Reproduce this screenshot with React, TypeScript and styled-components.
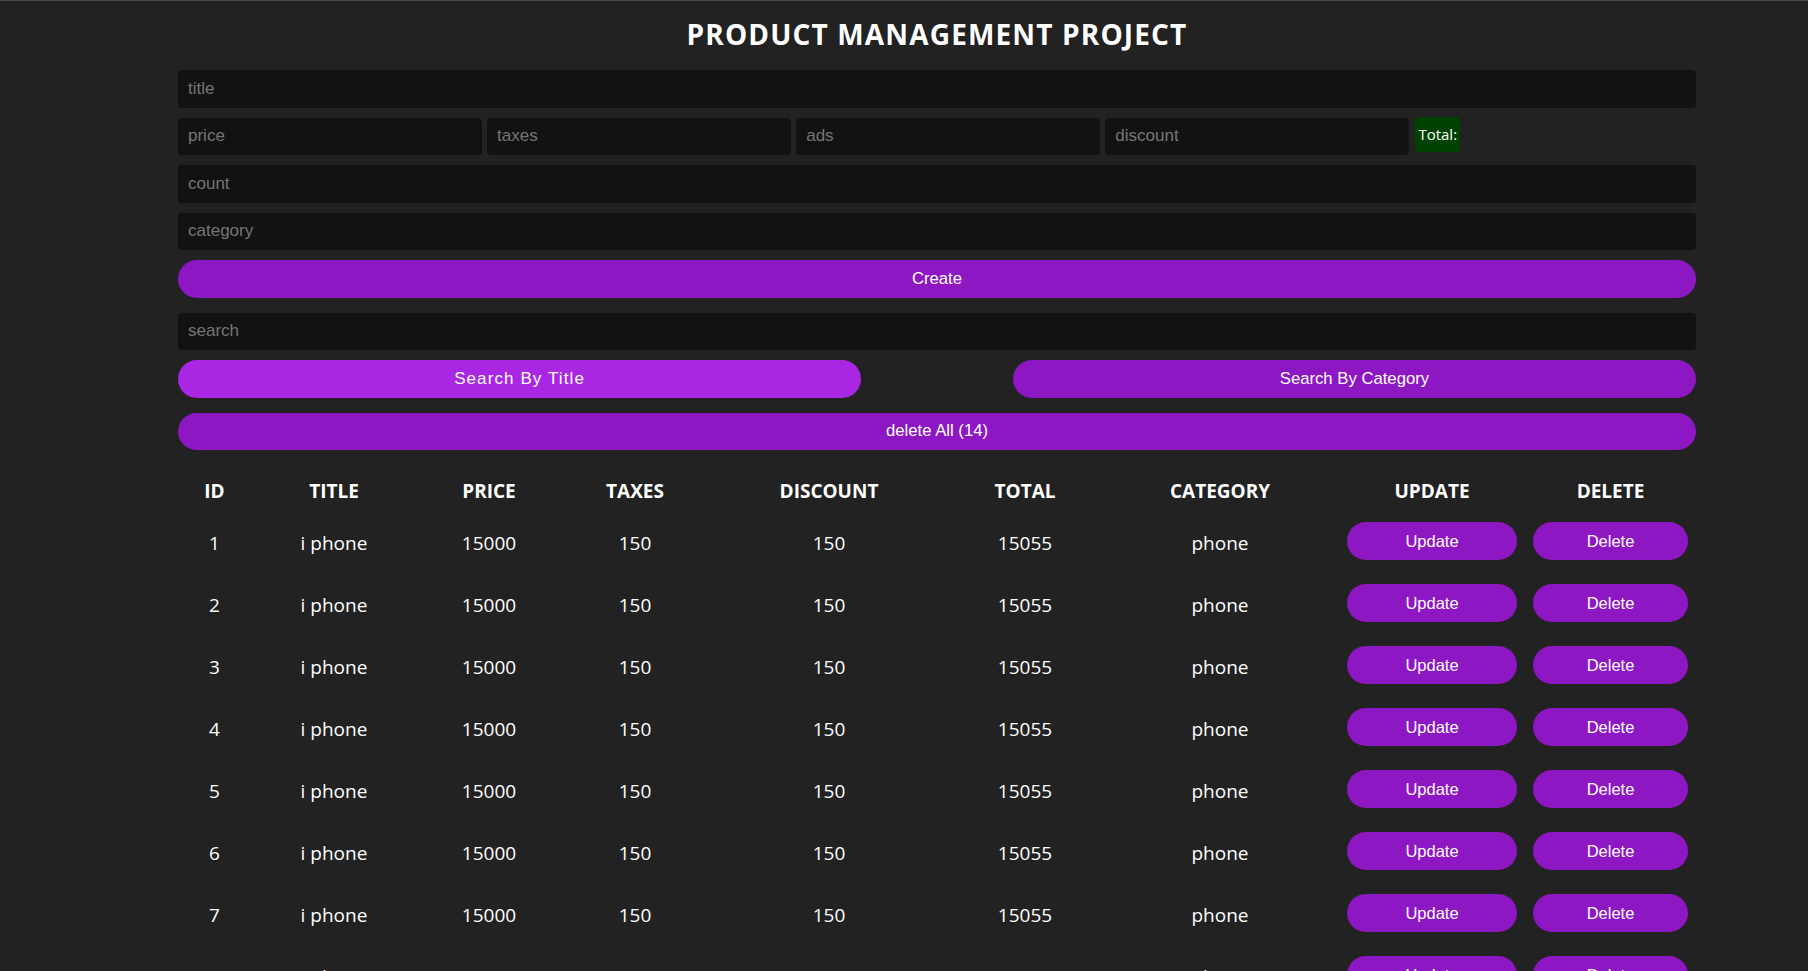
import React from "react";
import styled, { createGlobalStyle } from "styled-components";

const GlobalStyle = createGlobalStyle`
  html { scrollbar-width: none; }
  html::-webkit-scrollbar { display: none; }
  body {
    margin: 0;
    background: #222222;
    color: #ffffff;
    font-family: "Open Sans", "Noto Sans", sans-serif;
  }
  * { box-sizing: border-box; }
`;

const Page = styled.div`
  border-top: 1px solid #464646;
  min-height: 100vh;
`;

const Container = styled.main`
  width: 1518px;
  margin-left: 178px;
  display: flex;
  flex-direction: column;
`;

const Title = styled.h1`
  margin: 0;
  padding: 13px 0 16px;
  height: 69px;
  line-height: 40px;
  text-align: center;
  font-family: "Open Sans", sans-serif;
  font-weight: 700;
  font-size: 28px;
  letter-spacing: 1.15px;
  color: #ffffff;
`;

const Sections = styled.div`
  display: flex;
  flex-direction: column;
  gap: 15px;
`;

const Group = styled.div`
  display: flex;
  flex-direction: column;
  gap: 10px;
`;

const Input = styled.input<{ $width?: string }>`
  width: ${(p) => p.$width ?? "100%"};
  flex: none;
  height: 37.5px;
  border: none;
  outline: none;
  border-radius: 4px;
  background: #121212;
  color: #ffffff;
  padding: 0 10px;
  font-family: "Liberation Sans", Arial, sans-serif;
  font-size: 17px;
  &::placeholder { color: #767676; }
`;

const PriceRow = styled.div`
  display: flex;
  align-items: flex-start;
  gap: 5.5px;
`;

const TotalBadge = styled.small`
  height: 35px;
  padding: 0 3px;
  margin-left: 1px;
  border-radius: 4px;
  background: #004300;
  color: #ffffff;
  display: flex;
  align-items: center;
  font-family: "Open Sans", sans-serif;
  font-size: 15px;
  margin-top: -1px;
`;

const PillButton = styled.button<{ $width?: string; $active?: boolean }>`
  width: ${(p) => p.$width ?? "100%"};
  height: 37.5px;
  border: none;
  border-radius: 19px;
  background: ${(p) => (p.$active ? "#a927e2" : "#8e17c4")};
  color: #ffffff;
  font-family: "Liberation Sans", Arial, sans-serif;
  font-size: ${(p) => (p.$active ? "17px" : "16.7px")};
  letter-spacing: ${(p) => (p.$active ? "1.1px" : "0")};
  cursor: pointer;
`;

const SearchButtons = styled.div`
  display: flex;
  justify-content: space-between;
`;

const Table = styled.table`
  width: 100%;
  margin-top: 20px;
  border-collapse: collapse;
  table-layout: fixed;
  font-family: "Open Sans", sans-serif;
`;

const Th = styled.th`
  height: 40px;
  padding: 2px 0 0;
  font-size: 19px;
  font-weight: 700;
  text-align: center;
  color: #ffffff;
`;

const Td = styled.td<{ $action?: boolean }>`
  height: 62px;
  padding: ${(p) => (p.$action ? "0 8px" : "4px 8px 0")};
  font-size: 19px;
  text-align: center;
  vertical-align: middle;
  color: #ffffff;
`;

const RowButton = styled.button`
  width: 100%;
  height: 37.5px;
  border: none;
  border-radius: 19px;
  background: #8e17c4;
  color: #ffffff;
  font-family: "Liberation Sans", Arial, sans-serif;
  font-size: 16.5px;
  cursor: pointer;
`;

const columns = [
  { label: "ID", width: 73 },
  { label: "TITLE", width: 166 },
  { label: "PRICE", width: 144 },
  { label: "TAXES", width: 148 },
  { label: "DISCOUNT", width: 240 },
  { label: "TOTAL", width: 152 },
  { label: "CATEGORY", width: 238 },
  { label: "UPDATE", width: 186 },
  { label: "DELETE", width: 171 },
];

const products = Array.from({ length: 14 }, (_, i) => ({
  id: i + 1,
  title: "i phone",
  price: 15000,
  taxes: 150,
  discount: 150,
  total: 15055,
  category: "phone",
}));

export default function App() {
  return (
    <Page>
      <GlobalStyle />
      <Container>
        <Title>PRODUCT MANAGEMENT PROJECT</Title>
        <Sections>
          <Group>
            <Input placeholder="title" />
            <PriceRow>
              <Input $width="20%" placeholder="price" />
              <Input $width="20%" placeholder="taxes" />
              <Input $width="20%" placeholder="ads" />
              <Input $width="20%" placeholder="discount" />
              <TotalBadge>Total:</TotalBadge>
            </PriceRow>
            <Input placeholder="count" />
            <Input placeholder="category" />
            <PillButton>Create</PillButton>
          </Group>
          <Group>
            <Input placeholder="search" />
            <SearchButtons>
              <PillButton $width="45%" $active>
                Search By Title
              </PillButton>
              <PillButton $width="45%">Search By Category</PillButton>
            </SearchButtons>
          </Group>
          <PillButton>delete All (14)</PillButton>
        </Sections>
        <Table>
          <colgroup>
            {columns.map((c) => (
              <col key={c.label} style={{ width: c.width }} />
            ))}
          </colgroup>
          <thead>
            <tr>
              {columns.map((c) => (
                <Th key={c.label}>{c.label}</Th>
              ))}
            </tr>
          </thead>
          <tbody>
            {products.map((p) => (
              <tr key={p.id}>
                <Td>{p.id}</Td>
                <Td>{p.title}</Td>
                <Td>{p.price}</Td>
                <Td>{p.taxes}</Td>
                <Td>{p.discount}</Td>
                <Td>{p.total}</Td>
                <Td>{p.category}</Td>
                <Td $action>
                  <RowButton>Update</RowButton>
                </Td>
                <Td $action>
                  <RowButton>Delete</RowButton>
                </Td>
              </tr>
            ))}
          </tbody>
        </Table>
      </Container>
    </Page>
  );
}
